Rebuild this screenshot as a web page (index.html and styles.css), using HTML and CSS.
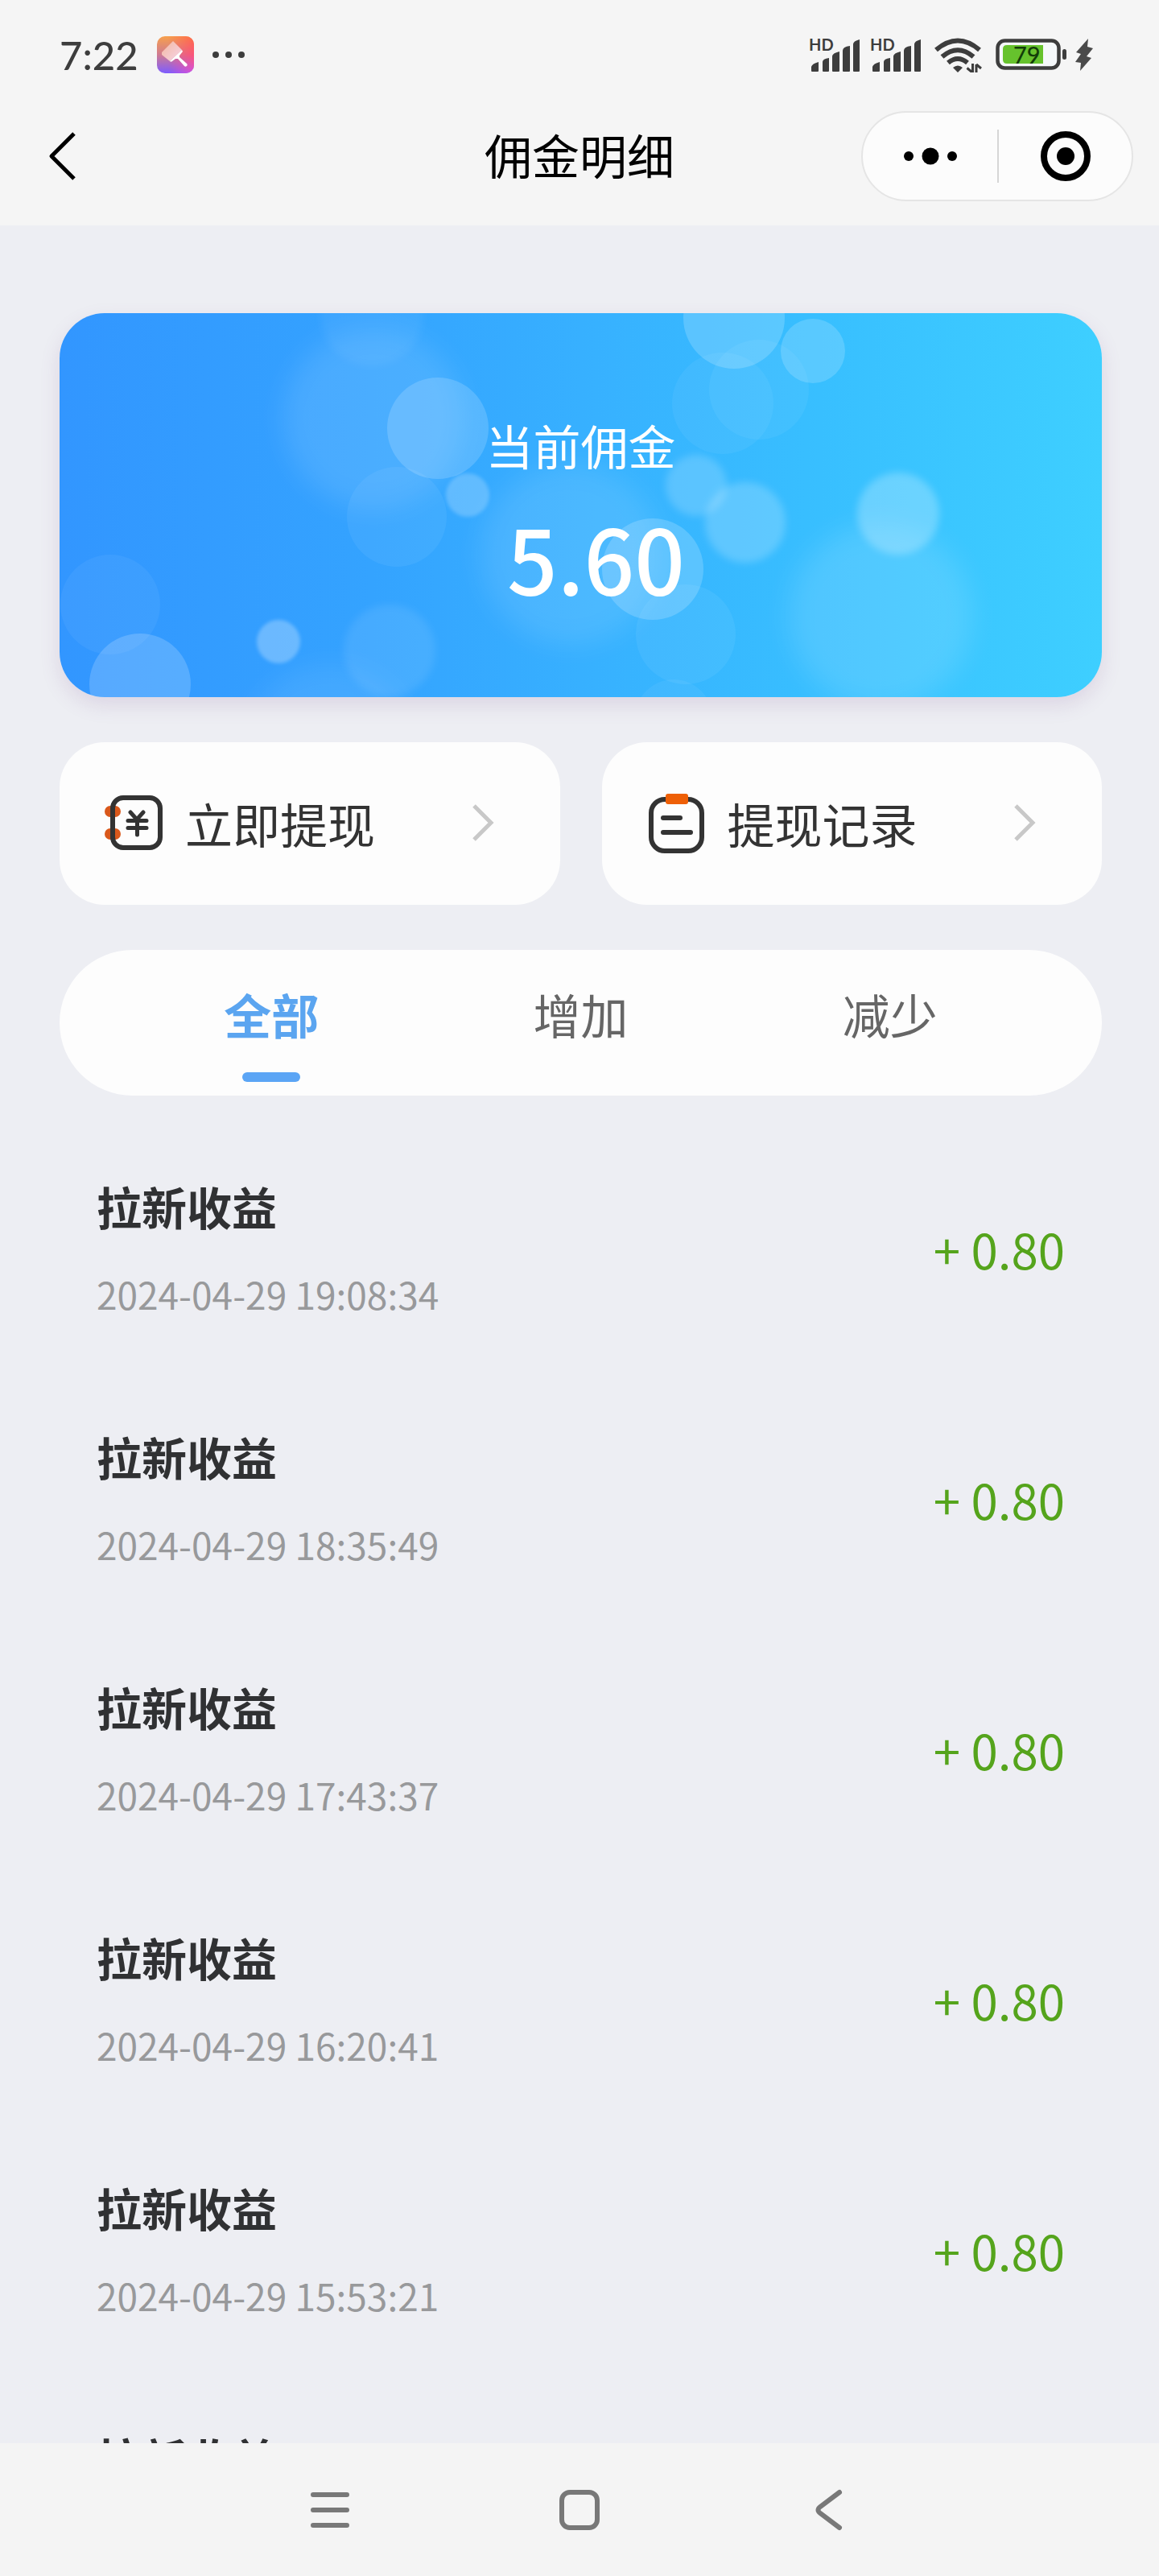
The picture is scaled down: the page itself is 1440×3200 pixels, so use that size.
FILE: index.html
```html
<!DOCTYPE html>
<html lang="zh-CN">
<head>
<meta charset="utf-8">
<meta name="viewport" content="width=device-width, initial-scale=1">
<title>佣金明细</title>
<link rel="stylesheet" href="styles.css">
</head>
<body>
<div class="app">
  <header class="top">
    <div class="status">
      <div class="status-left">
        <time class="clock">7:22</time>
        <svg class="app-icon" width="46" height="46" viewBox="0 0 46 46" aria-hidden="true">
          <defs>
            <linearGradient id="ic1" x1="0" y1="0" x2="0" y2="1"><stop offset="0" stop-color="#f7a04c"/><stop offset=".5" stop-color="#cf7a92"/><stop offset="1" stop-color="#7d5cff"/></linearGradient>
            <linearGradient id="ic2" x1="0" y1="0" x2="0" y2="1"><stop offset="0" stop-color="#ff6a48"/><stop offset=".5" stop-color="#fb5478"/><stop offset="1" stop-color="#d94fdc"/></linearGradient>
            <linearGradient id="ic3" x1="0" y1="0" x2="1" y2="0"><stop offset=".3" stop-color="#fff" stop-opacity="0"/><stop offset="1" stop-color="#fff"/></linearGradient>
            <linearGradient id="ic4" x1="0" y1="0" x2="1" y2="1"><stop offset="0" stop-color="#f3b9a0"/><stop offset="1" stop-color="#f6d4ea"/></linearGradient>
            <mask id="icm"><rect width="46" height="46" fill="url(#ic3)"/></mask>
          </defs>
          <rect width="46" height="46" rx="10" fill="url(#ic1)"/>
          <rect width="46" height="46" rx="10" fill="url(#ic2)" mask="url(#icm)"/>
          <path d="M20 6L6 20v3l10 8L31 17z" fill="url(#ic4)"/>
          <path d="M16 31l15-14 1 2-4 5v2l9 8c2 2-1 5-3 3l-8-9h-3l-4 3c-1 1-2 1-3 0z" fill="#fff"/>
        </svg>
        <svg width="42" height="10" viewBox="0 0 42 10" fill="#3d3d3d" aria-hidden="true"><circle cx="5" cy="5" r="4"/><circle cx="21" cy="5" r="4"/><circle cx="37" cy="5" r="4"/></svg>
      </div>
      <div class="status-right">
        <svg width="68" height="44" viewBox="0 0 68 44" fill="#3d3d3d" role="img" aria-label="HD">
          <text class="hd" x="0" y="17">HD</text>
          <path d="M3 42v-5q1-4 9-6v11q0 1-1 1H4q-1 0-1-1zM17 42V31q0-4 8-5v16q0 1-1 1h-6q-1 0-1-1zM29 42V24q0-4 9-6v24q0 1-1 1h-7q-1 0-1-1zM42 42V17q0-5 9-6v31q0 1-1 1h-7q-1 0-1-1zM55 42V9q0-4 8-6v39q0 1-1 1h-6q-1 0-1-1z"/>
        </svg>
        <svg width="68" height="44" viewBox="0 0 68 44" fill="#3d3d3d" role="img" aria-label="HD">
          <text class="hd" x="0" y="17">HD</text>
          <path d="M3 42v-5q1-4 9-6v11q0 1-1 1H4q-1 0-1-1zM17 42V31q0-4 8-5v16q0 1-1 1h-6q-1 0-1-1zM29 42V24q0-4 9-6v24q0 1-1 1h-7q-1 0-1-1zM42 42V17q0-5 9-6v31q0 1-1 1h-7q-1 0-1-1zM55 42V9q0-4 8-6v39q0 1-1 1h-6q-1 0-1-1z"/>
        </svg>
        <svg class="wifi" width="60" height="44" viewBox="0 0 60 44" fill="none" stroke="#3d3d3d" stroke-width="6" aria-hidden="true">
          <path d="M3 16Q30-7 57 16M10.500 24.500Q30 8 49.500 24.500M18 32Q30 22 42 32"/>
          <path d="M24 38q6-5 12 0l-6 6z" fill="#3d3d3d" stroke="none"/>
          <path d="M48.500 33v11M41.500 38.500l6 5M53 45V34M53 34l6 5" stroke-width="3"/>
        </svg>
        <svg width="90" height="40" viewBox="0 0 90 40" role="img" aria-label="79">
          <rect x="2.500" y="2.500" width="76" height="34" rx="9" fill="#f5f8fa" stroke="#3d3d3d" stroke-width="4.500"/>
          <path d="M14 8h45v23H14q-5 0-5-5V13q0-5 5-5z" fill="#66c22d"/>
          <text class="level" x="22" y="31">79</text>
          <rect x="83" y="13" width="5" height="13" rx="2.500" fill="#3d3d3d"/>
        </svg>
        <svg width="24" height="42" viewBox="0 0 24 42" fill="#4a4a4a" aria-hidden="true"><path d="M17 1L2 18l6 2-7 10 7 1-1 10 14-16-6-2 8-10-7-2z"/></svg>
      </div>
    </div>
    <nav class="bar">
      <button class="back" type="button" aria-label="返回">
        <svg width="36" height="64" viewBox="0 0 36 64" fill="none" stroke="#000" stroke-width="5" stroke-linejoin="round"><path d="M32 4L4 32l28 28"/></svg>
      </button>
      <h1 class="title">佣金明细</h1>
      <div class="capsule">
        <button type="button" aria-label="更多">
          <svg width="66" height="22" viewBox="0 0 66 22"><circle cx="6" cy="11" r="6"/><circle cx="33" cy="11" r="10.500"/><circle cx="60" cy="11" r="6"/></svg>
        </button>
        <button type="button" aria-label="关闭">
          <svg width="62" height="62" viewBox="0 0 62 62"><circle cx="31" cy="31" r="27" fill="none" stroke="#000" stroke-width="8"/><circle cx="31" cy="31" r="11"/></svg>
        </button>
      </div>
    </nav>
  </header>

  <main class="content">
    <section class="balance">
      <svg class="bokeh" viewBox="0 0 1295 477" preserveAspectRatio="xMidYMid slice" fill="#fff" aria-hidden="true">
        <defs>
          <filter id="b2" x="-30%" y="-30%" width="160%" height="160%"><feGaussianBlur stdDeviation="2"/></filter>
          <filter id="b5" x="-30%" y="-30%" width="160%" height="160%"><feGaussianBlur stdDeviation="5"/></filter>
          <filter id="b12" x="-40%" y="-40%" width="180%" height="180%"><feGaussianBlur stdDeviation="16"/></filter>
        </defs>
        <g filter="url(#b12)">
          <circle cx="390" cy="131" r="112" opacity=".11"/>
          <circle cx="336" cy="545" r="108" opacity=".08"/>
          <circle cx="635" cy="300" r="112" opacity=".1"/>
          <circle cx="1020" cy="376" r="114" opacity=".12"/>
        </g>
        <g filter="url(#b5)">
          <circle cx="388" cy="2" r="64" opacity=".05"/>
          <circle cx="410" cy="419" r="57" opacity=".09"/>
          <circle cx="791" cy="214" r="38" opacity=".18"/>
          <circle cx="852" cy="260" r="50" opacity=".2"/>
          <circle cx="1042" cy="249" r="51" opacity=".25"/>
        </g>
        <g filter="url(#b2)">
          <circle cx="507" cy="226" r="27" opacity=".22"/>
          <circle cx="272" cy="408" r="27" opacity=".28"/>
        </g>
        <circle cx="470" cy="143" r="63" opacity=".16"/>
        <circle cx="419" cy="253" r="62" opacity=".06"/>
        <circle cx="63" cy="362" r="62" opacity=".05"/>
        <circle cx="100" cy="461" r="63" opacity=".18"/>
        <circle cx="838" cy="6" r="63" opacity=".18"/>
        <circle cx="936" cy="47" r="40" opacity=".17"/>
        <circle cx="824" cy="112" r="63" opacity=".05"/>
        <circle cx="869" cy="95" r="62" opacity=".05"/>
        <circle cx="737" cy="318" r="63" opacity=".18"/>
        <circle cx="778" cy="399" r="62" opacity=".06"/>
        <circle cx="763" cy="503" r="48" opacity=".05"/>
      </svg>
      <p class="balance-label">当前佣金</p>
      <p class="balance-value">5.60</p>
    </section>

    <div class="actions">
      <button class="action" type="button">
        <svg width="76" height="76" viewBox="0 0 76 76" fill="none" stroke="#333" stroke-width="6" stroke-linecap="round" stroke-linejoin="round" aria-hidden="true">
          <rect x="2" y="16" width="20" height="14" rx="7" fill="#d9581b" stroke="none"/>
          <rect x="2" y="44" width="20" height="14" rx="7" fill="#d9581b" stroke="none"/>
          <rect x="12" y="6" width="59" height="62" rx="13"/>
          <path d="M34 24l8 9 8-9M31 34.500h23M31 43.500h23M42.500 34v18" stroke-width="5"/>
        </svg>
        <span class="action-text">立即提现</span>
        <svg class="chevron" width="28" height="48" viewBox="0 0 28 48" fill="none" stroke="#c8c8c8" stroke-width="5"><path d="M3 2l21 21L3 44"/></svg>
      </button>
      <button class="action" type="button">
        <svg width="76" height="76" viewBox="0 0 76 76" fill="none" stroke="#333" stroke-width="6" stroke-linecap="round" aria-hidden="true">
          <rect x="7" y="8" width="63" height="64" rx="17"/>
          <rect x="25" y="1" width="28" height="13" rx="3" fill="#ee5f06" stroke="none"/>
          <path d="M22 31h21M22 49h34" stroke-width="6"/>
        </svg>
        <span class="action-text">提现记录</span>
        <svg class="chevron" width="28" height="48" viewBox="0 0 28 48" fill="none" stroke="#c8c8c8" stroke-width="5"><path d="M3 2l21 21L3 44"/></svg>
      </button>
    </div>

    <div class="tabs" role="tablist">
      <button class="tab active" type="button" role="tab" aria-selected="true">全部</button>
      <button class="tab" type="button" role="tab" aria-selected="false">增加</button>
      <button class="tab" type="button" role="tab" aria-selected="false">减少</button>
    </div>

    <ul class="records">
      <li class="record"><div class="info"><h2 class="name">拉新收益</h2><time class="date">2024-04-29 19:08:34</time></div><span class="amount">+ 0.80</span></li>
      <li class="record"><div class="info"><h2 class="name">拉新收益</h2><time class="date">2024-04-29 18:35:49</time></div><span class="amount">+ 0.80</span></li>
      <li class="record"><div class="info"><h2 class="name">拉新收益</h2><time class="date">2024-04-29 17:43:37</time></div><span class="amount">+ 0.80</span></li>
      <li class="record"><div class="info"><h2 class="name">拉新收益</h2><time class="date">2024-04-29 16:20:41</time></div><span class="amount">+ 0.80</span></li>
      <li class="record"><div class="info"><h2 class="name">拉新收益</h2><time class="date">2024-04-29 15:53:21</time></div><span class="amount">+ 0.80</span></li>
      <li class="record"><div class="info"><h2 class="name">拉新收益</h2></div></li>
    </ul>
  </main>

  <footer class="sysnav">
    <button type="button" aria-label="最近任务"><svg width="50" height="52" viewBox="0 0 50 52" stroke="#787878" stroke-width="6" stroke-linecap="round"><path d="M4 7h42M4 26h42M4 45h42"/></svg></button>
    <button type="button" aria-label="主屏幕"><svg width="50" height="52" viewBox="0 0 50 52" fill="none" stroke="#787878" stroke-width="6"><rect x="3" y="4" width="44" height="44" rx="10"/></svg></button>
    <button type="button" aria-label="返回"><svg width="50" height="52" viewBox="0 0 50 52" fill="none" stroke="#787878" stroke-width="6" stroke-linecap="round"><path d="M38 4L14 22q-5 4 0 8l24 18"/></svg></button>
  </footer>
</div>
</body>
</html>
```
FILE: styles.css
```css
* {
  box-sizing: border-box;
}

body,
h1,
h2,
p,
ul {
  margin: 0;
  padding: 0;
}

body {
  font-family: "Noto Sans CJK SC", sans-serif;
  background: #edeef3;
  color: #303133;
}

button {
  padding: 0;
  border: 0;
  background: none;
  font: inherit;
  color: inherit;
  cursor: pointer;
}

svg {
  display: block;
  flex: none;
}

.app {
  display: flex;
  flex-direction: column;
  height: 100vh;
}

.top {
  flex: none;
  background: #f5f5f5;
}

.status {
  display: flex;
  justify-content: space-between;
  align-items: center;
  height: 136px;
  padding: 0 81px 0 74px;
}

.status-left,
.status-right {
  display: flex;
  align-items: center;
}

.clock {
  font-family: Lato, sans-serif;
  font-size: 49px;
  line-height: 60px;
  font-weight: 500;
  color: #3d3d3d;
}

.app-icon {
  margin: 0 22px 0 23px;
}

.status-right {
  gap: 8px;
}

.wifi {
  margin: 0 9px 0 3px;
}

.hd {
  font: 700 20px Lato, sans-serif;
}

.level {
  font: 500 29px Lato, sans-serif;
  fill: #123d08;
}

.bar {
  display: grid;
  grid-template-columns: 1fr auto 1fr;
  align-items: center;
  padding: 2px 32px 30px;
}

.back {
  justify-self: start;
  margin-left: 28px;
}

.title {
  padding-bottom: 4px;
  font-size: 59px;
  line-height: 80px;
  font-weight: 400;
  color: #000;
}

.capsule {
  justify-self: end;
  display: grid;
  grid-template-columns: 1fr 1fr;
  width: 338px;
  height: 112px;
  padding: 21px 0;
  border: 2px solid #e5e5e5;
  border-radius: 56px;
  background: #fcfcfc;
}

.capsule button {
  display: flex;
  align-items: center;
  justify-content: center;
}

.capsule button + button {
  border-left: 2px solid #d6d6d6;
}

.content {
  flex: 1;
  min-height: 0;
  padding: 109px 71px 0 74px;
  overflow-y: auto;
  scrollbar-width: none;
}

.balance {
  position: relative;
  overflow: hidden;
  padding: 124px 0 95px;
  border-radius: 56px;
  background: linear-gradient(90deg, #3296ff, #34a3ff 30%, #37b0ff 50%, #38bfff 73%, #3ecfff);
  box-shadow: 0 10px 24px rgba(130, 90, 150, 0.16);
  color: #fff;
  text-align: center;
}

.bokeh {
  position: absolute;
  inset: 0;
  width: 100%;
  height: 100%;
}

.balance-label,
.balance-value {
  position: relative;
}

.balance-label {
  font-size: 59px;
  line-height: 80px;
}

.balance-value {
  margin-top: 18px;
  padding-left: 38px;
  font-size: 110px;
  line-height: 160px;
  font-weight: 500;
}

.actions {
  display: grid;
  grid-template-columns: 1fr 1fr;
  gap: 52px;
  margin-top: 56px;
}

.action {
  display: flex;
  align-items: center;
  height: 202px;
  padding: 0 82px 0 54px;
  border-radius: 56px;
  background: #fdfdfd;
}

.action-text {
  margin-left: 26px;
  font-size: 59px;
  line-height: 80px;
  color: #333;
}

.chevron {
  margin-left: auto;
}

.tabs {
  display: grid;
  grid-template-columns: repeat(3, 1fr);
  margin-top: 56px;
  padding: 40px 71px 17px;
  border-radius: 91px;
  background: #fdfdfd;
}

.tab {
  display: flex;
  flex-direction: column;
  align-items: center;
  height: 124px;
  font-size: 59px;
  line-height: 80px;
  color: #666;
}

.tab.active {
  font-weight: 700;
  color: #5ba5f0;
}

.tab.active::after {
  content: "";
  width: 72px;
  height: 12px;
  margin-top: 32px;
  border-radius: 6px;
  background: #5ba5f5;
}

.records {
  padding: 34px 46px 0;
  list-style: none;
}

.record {
  display: flex;
  justify-content: space-between;
  align-items: center;
  height: 311px;
}

.info {
  display: flex;
  flex-direction: column;
  gap: 38px;
  height: 178px;
}

.name {
  font-size: 56px;
  line-height: 72px;
  font-weight: 700;
}

.date {
  font-size: 46px;
  line-height: 70px;
  color: #98999b;
}

.amount {
  font-size: 60px;
  line-height: 80px;
  color: #55a41c;
}

.sysnav {
  flex: none;
  display: grid;
  grid-template-columns: repeat(3, 1fr);
  height: 165px;
  padding: 0 255px;
  background: #f4f4f4;
}

.sysnav button {
  display: flex;
  align-items: center;
  justify-content: center;
}
```
